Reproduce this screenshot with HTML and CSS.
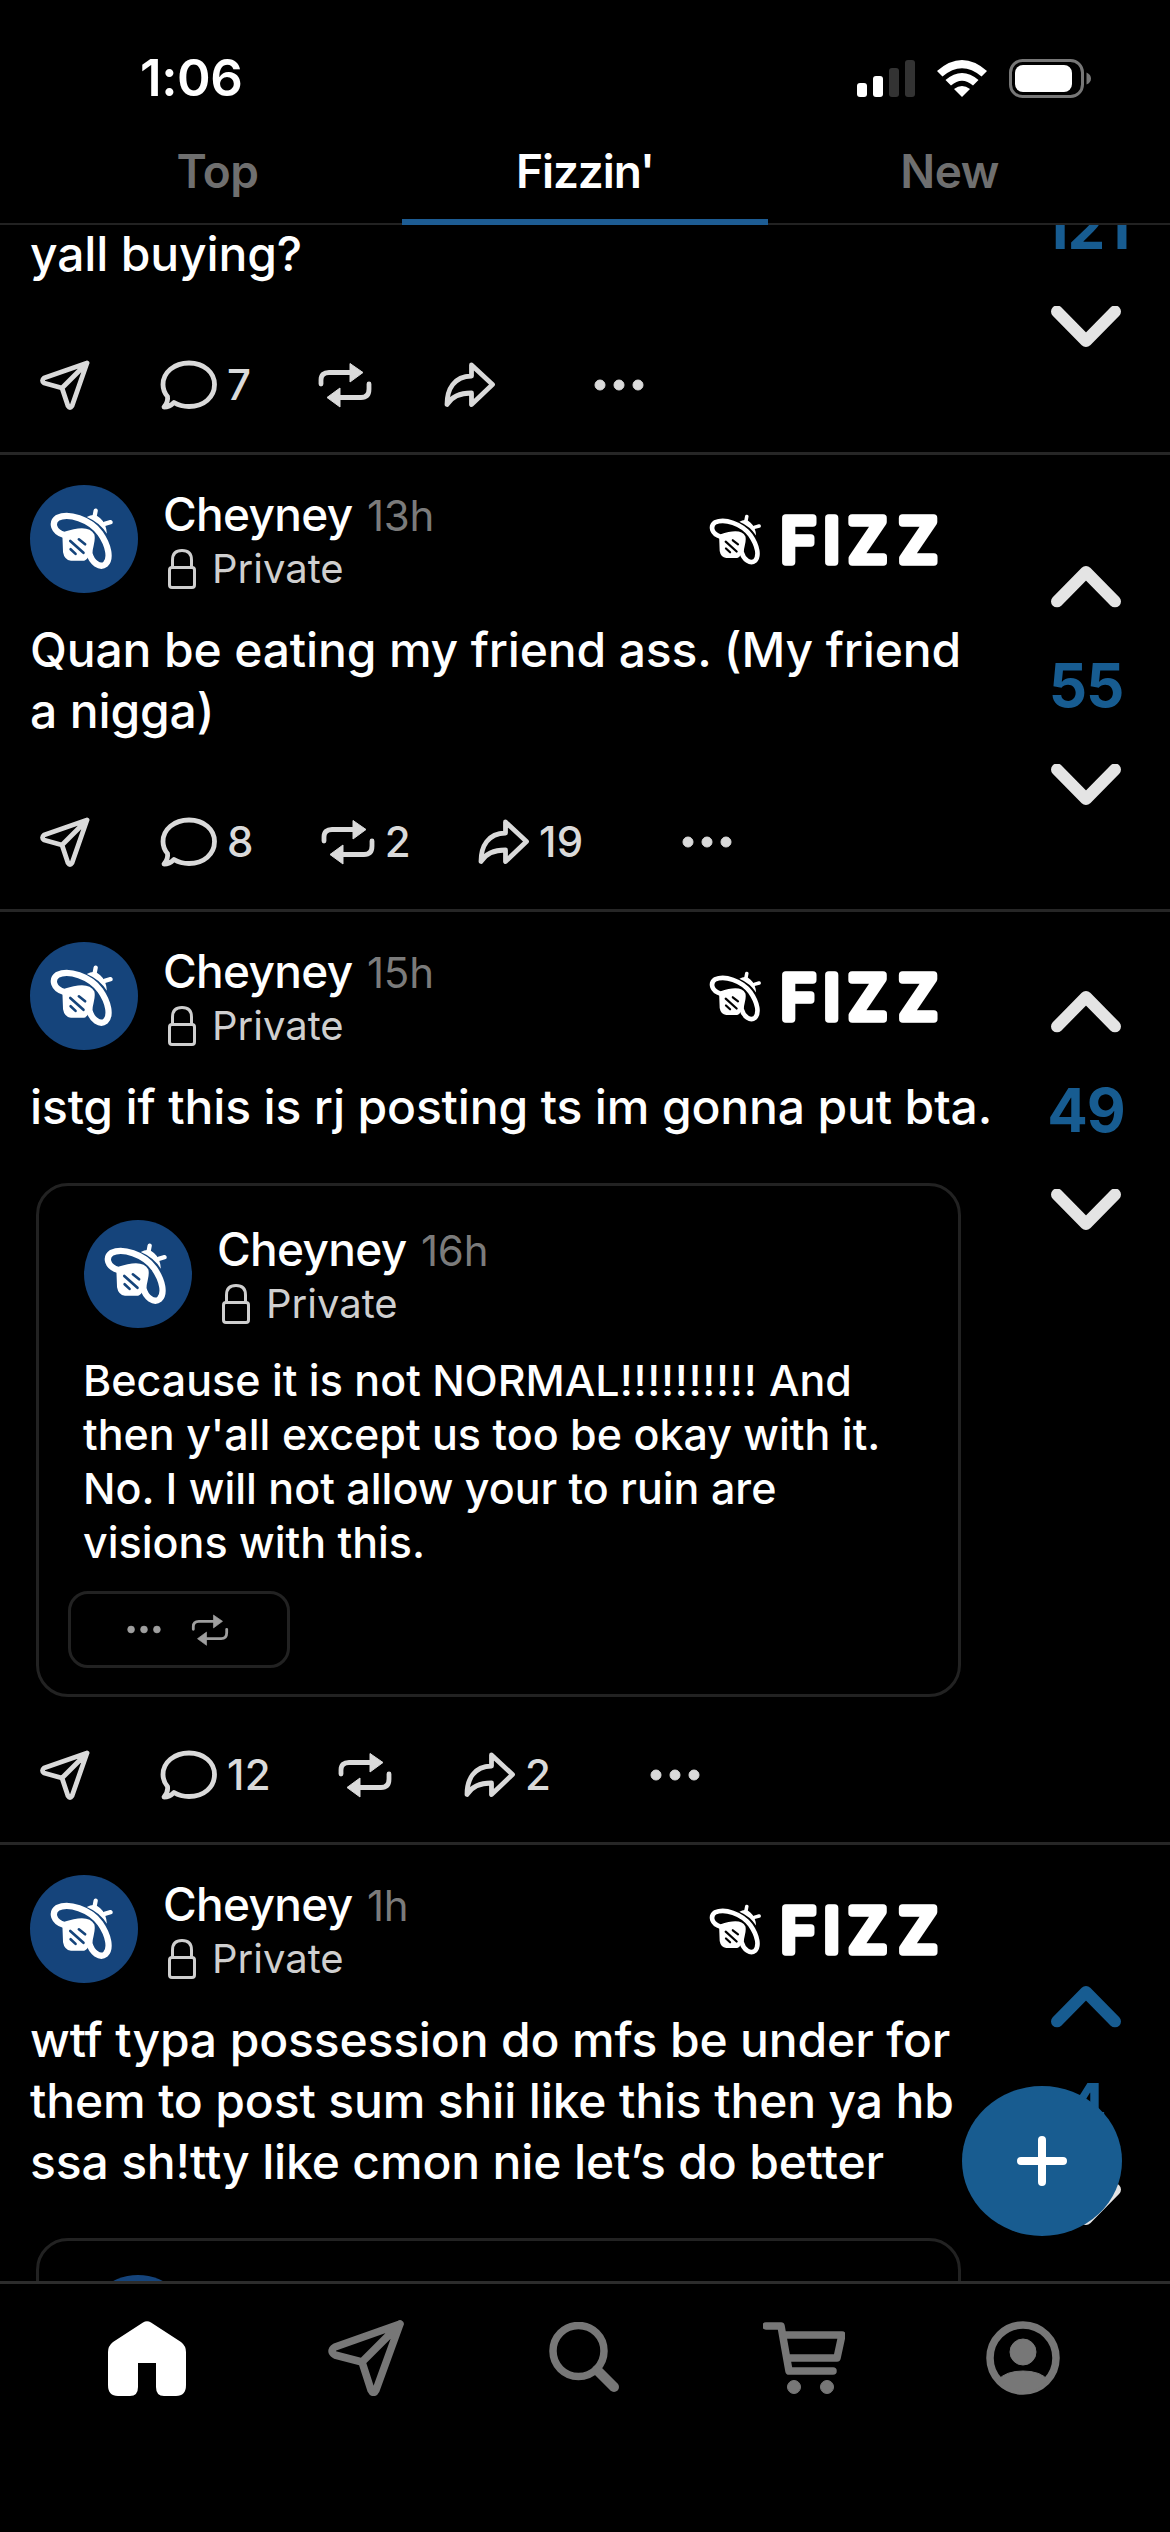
FILE: index.html
```html
<!DOCTYPE html>
<html lang="en">
<head>
<meta charset="utf-8">
<title>Fizz</title>
<link rel="stylesheet" href="styles.css">
</head>
<body>
<svg class="sprite" aria-hidden="true">
  <symbol id="bee" viewBox="75 84 190 188">
    <path class="bee-body" d="M112 166L183 150Q204 158 200 192Q196 240 178 244H138Q118 241 114 218Z"/>
    <path class="bee-wing" d="M118 166C84 156 78 128 97 114C132 98 194 118 226 160C254 200 259 238 243 254C226 268 201 249 194 222C193 200 204 186 200 168C190 148 158 152 118 166Z"/>
    <path class="bee-stripe" d="M136 184L176 220M162 179L181 194M137 209L152 223"/>
    <path class="bee-head" d="M186 111Q210 98 226 114Q245 130 247 162Q226 128 186 111Z"/>
    <path class="bee-feeler" d="M210 108L213 92M240 132L258 127"/>
  </symbol>
  <symbol id="send" viewBox="0 0 50 50">
    <path class="line" d="M47 3L4 18Q1 20.500 4 23L22 28L28 46Q30 49 32 46ZM22 28L47 3"/>
  </symbol>
  <symbol id="comment" viewBox="0 0 57 50">
    <path class="line" d="M29 3C44 3 54.500 12.500 54.500 24.500C54.500 37 44 46.500 29 46.500C23 46.500 18 45 14 42.500C11 45.500 7.500 47 4 47C7 43.500 8 39.500 7.500 36.500C4.500 33 3 29 3 24.500C3 12.500 14 3 29 3Z"/>
  </symbol>
  <symbol id="repost" viewBox="0 0 54 46">
    <path class="line" d="M3 22V18Q3 10.500 11 10.500H33M51 22V27Q51 35.500 43 35.500H20"/>
    <path class="solid" d="M32 1.500V20L45 10.500ZM22 26V45L9 35.500Z"/>
  </symbol>
  <symbol id="share" viewBox="0 0 51 46">
    <path class="line" d="M27.500 3L48.500 22.500L27.500 42.500V31C17 31 8 34 3 42.500C3 27 10 14.500 27.500 14Z"/>
  </symbol>
  <symbol id="dots" viewBox="0 0 50 12">
    <circle class="solid" cx="6" cy="6" r="5"/><circle class="solid" cx="25" cy="6" r="5"/><circle class="solid" cx="44" cy="6" r="5"/>
  </symbol>
  <symbol id="lock" viewBox="0 0 28 40">
    <rect class="line" x="1.500" y="18.500" width="25" height="20" rx="2.500"/>
    <path class="line" d="M4.500 18V11Q4.500 1.500 14 1.500T23.500 11V18"/>
  </symbol>
  <symbol id="up" viewBox="0 0 70 42">
    <path class="line" d="M6 36L35 6.500L64 36"/>
  </symbol>
  <symbol id="down" viewBox="0 0 70 42">
    <path class="line" d="M6 6L35 35.500L64 6"/>
  </symbol>
</svg>

<div class="phone">
  <header class="status">
    <span class="clock">1:06</span>
    <div class="indicators">
      <svg width="58" height="37" viewBox="0 0 58 37"><rect x="0" y="23" width="10" height="14" rx="3" fill="#fff"/><rect x="16" y="16" width="10" height="21" rx="3" fill="#fff"/><rect x="32" y="8" width="10" height="29" rx="3" fill="#333"/><rect x="48" y="0" width="10" height="37" rx="3" fill="#333"/></svg>
      <svg width="50" height="37" viewBox="0 0 50 37" fill="#fff"><path d="M0 11Q25 -11 50 11L44.500 16.500Q25 0 5.500 16.500Z"/><path d="M8.500 20Q25 6 41.500 20L36 25.500Q25 16 14 25.500Z"/><path d="M17 29Q25 23 33 29L25 37Z"/></svg>
      <svg width="82" height="39" viewBox="0 0 82 39"><rect x="1.500" y="1.500" width="72" height="36" rx="12" fill="none" stroke="#777" stroke-width="3"/><rect x="6" y="6" width="57" height="27" rx="8" fill="#fff"/><path d="M77.500 13.500Q82 15.500 82 19.500T77.500 25.500Z" fill="#777"/></svg>
    </div>
  </header>
  <nav class="tabs">
    <span class="tab">Top</span>
    <span class="tab tab-active">Fizzin'</span>
    <span class="tab">New</span>
  </nav>

  <main class="feed">
    <article class="post post-cut">
      <div class="content">
        <p class="text">yall buying?</p>
        <div class="actions">
          <svg class="i-send"><use href="#send"/></svg>
          <svg class="i-comment"><use href="#comment"/></svg><span class="count">7</span>
          <svg class="i-repost"><use href="#repost"/></svg><span class="none"></span>
          <svg class="i-share"><use href="#share"/></svg>
          <svg class="i-dots"><use href="#dots"/></svg>
        </div>
      </div>
      <aside class="votes">
        <svg class="chev"><use href="#up"/></svg><b class="score">121</b><svg class="chev"><use href="#down"/></svg>
      </aside>
    </article>

    <article class="post post-short">
      <div class="content">
        <div class="head">
          <span class="avatar"><svg class="bee"><use href="#bee"/></svg></span>
          <div class="who">
            <div class="name">Cheyney <span class="time">13h</span></div>
            <div class="private"><svg class="i-lock"><use href="#lock"/></svg>Private</div>
          </div>
          <svg class="logo" viewBox="0 0 232 54"><use href="#bee" x="0" y="1" width="52" height="52"/><text class="logo-text" y="49" x="71.5 114.5 139.5 190">FIZZ</text></svg>
        </div>
        <p class="text">Quan be eating my friend ass. (My friend<br>a nigga)</p>
        <div class="actions">
          <svg class="i-send"><use href="#send"/></svg>
          <svg class="i-comment"><use href="#comment"/></svg><span class="count">8</span>
          <svg class="i-repost"><use href="#repost"/></svg><span class="count">2</span>
          <svg class="i-share"><use href="#share"/></svg><span class="count">19</span>
          <svg class="i-dots"><use href="#dots"/></svg>
        </div>
      </div>
      <aside class="votes">
        <svg class="chev"><use href="#up"/></svg><b class="score">55</b><svg class="chev"><use href="#down"/></svg>
      </aside>
    </article>

    <article class="post post-tall">
      <div class="content">
        <div class="head">
          <span class="avatar"><svg class="bee"><use href="#bee"/></svg></span>
          <div class="who">
            <div class="name">Cheyney <span class="time">15h</span></div>
            <div class="private"><svg class="i-lock"><use href="#lock"/></svg>Private</div>
          </div>
          <svg class="logo" viewBox="0 0 232 54"><use href="#bee" x="0" y="1" width="52" height="52"/><text class="logo-text" y="49" x="71.5 114.5 139.5 190">FIZZ</text></svg>
        </div>
        <p class="text">istg if this is rj posting ts im gonna put bta.</p>
        <section class="quote">
          <div class="head">
            <span class="avatar"><svg class="bee"><use href="#bee"/></svg></span>
            <div class="who">
              <div class="name">Cheyney <span class="time">16h</span></div>
              <div class="private"><svg class="i-lock"><use href="#lock"/></svg>Private</div>
            </div>
          </div>
          <p class="quote-text">Because it is not NORMAL<span class="bangs">!!!!!!!!!!</span> And<br>then y'all except us too be okay with it.<br>No. I will not allow your to ruin are<br>visions with this.</p>
          <div class="pill">
            <svg class="pill-dots"><use href="#dots"/></svg>
            <svg class="pill-repost"><use href="#repost"/></svg>
          </div>
        </section>
        <div class="actions">
          <svg class="i-send"><use href="#send"/></svg>
          <svg class="i-comment"><use href="#comment"/></svg><span class="count">12</span>
          <svg class="i-repost"><use href="#repost"/></svg><span class="none"></span>
          <svg class="i-share"><use href="#share"/></svg><span class="count">2</span>
          <svg class="i-dots"><use href="#dots"/></svg>
        </div>
      </div>
      <aside class="votes">
        <svg class="chev"><use href="#up"/></svg><b class="score">49</b><svg class="chev"><use href="#down"/></svg>
      </aside>
    </article>

    <article class="post post-last">
      <div class="content">
        <div class="head">
          <span class="avatar"><svg class="bee"><use href="#bee"/></svg></span>
          <div class="who">
            <div class="name">Cheyney <span class="time">1h</span></div>
            <div class="private"><svg class="i-lock"><use href="#lock"/></svg>Private</div>
          </div>
          <svg class="logo" viewBox="0 0 232 54"><use href="#bee" x="0" y="1" width="52" height="52"/><text class="logo-text" y="49" x="71.5 114.5 139.5 190">FIZZ</text></svg>
        </div>
        <p class="text">wtf typa possession do mfs be under for<br>them to post sum shii like this then ya hb<br>ssa sh!tty like cmon nie let’s do better</p>
        <section class="quote">
          <div class="head"><span class="avatar"></span></div>
        </section>
      </div>
      <aside class="votes">
        <svg class="chev chev-on"><use href="#up"/></svg><b class="score">4</b><svg class="chev"><use href="#down"/></svg>
      </aside>
    </article>

    <button class="fab" aria-label="New post"><svg width="50" height="50" viewBox="0 0 50 50"><path d="M25 4V46M4 25H46" stroke="#fff" stroke-width="8" stroke-linecap="round"/></svg></button>
  </main>

  <nav class="bar">
    <span class="item"><svg width="78" height="75" viewBox="0 0 78 75"><path fill="#fff" d="M35 1.500Q39 -1 43 1.500L73 21Q78 25 78 31V64Q78 75 68 75H56Q48 75 48 66V42H30V66Q30 75 22 75H10Q0 75 0 64V31Q0 25 5 21Z"/></svg></span>
    <span class="item"><svg width="76" height="76" viewBox="0 0 76 76"><path class="line" d="M72 4L7 27Q1 31 7 35L34 42L43 70Q45.500 75 48 70ZM34 42L72 4"/></svg></span>
    <span class="item"><svg width="72" height="72" viewBox="0 0 72 72"><circle class="line" cx="29.500" cy="29" r="25.500"/><path class="line handle" d="M48 48L65 65"/></svg></span>
    <span class="item"><svg width="82" height="72" viewBox="0 0 82 72"><path class="line" d="M3 4H18L26 49H70M20 13H79L74 36H25"/><circle class="solid" cx="31" cy="65" r="6.500"/><circle class="solid" cx="64" cy="65" r="6.500"/></svg></span>
    <span class="item"><svg width="74" height="74" viewBox="0 0 74 74"><circle class="line" cx="37" cy="37" r="33"/><circle class="solid" cx="37" cy="31" r="13"/><path class="solid" d="M12 59Q20 50 37 50T62 59Q52 71 37 71T12 59Z"/></svg></span>
  </nav>
</div>
</body>
</html>
```
FILE: styles.css
```css
* { box-sizing: border-box; }
body { margin: 0; background: #000; color: #fff; font-family: Inter, "Liberation Sans", sans-serif; }
p { margin: 0; }
svg { display: block; flex: none; }
.sprite { position: absolute; width: 0; height: 0; }
.phone { width: 1170px; height: 2532px; display: flex; flex-direction: column; overflow: hidden; background: #000; }

.line { fill: none; stroke: currentColor; stroke-linecap: round; stroke-linejoin: round; }
.solid { fill: currentColor; stroke: currentColor; stroke-width: 1; stroke-linejoin: round; }

.status { height: 139px; flex: none; display: flex; justify-content: space-between; padding: 46px 79px 0 140px; }
.clock { font-size: 51px; line-height: 63px; font-weight: 600; letter-spacing: -0.4px; }
.indicators { display: flex; align-items: center; gap: 22px; height: 64px; }

.tabs { height: 86px; flex: none; display: grid; grid-template-columns: 402px 366px 402px; border-bottom: 2px solid #222; }
.tab { text-align: center; font-size: 46px; line-height: 65px; font-weight: 600; color: #6f6f6f; padding-left: 33px; letter-spacing: -0.5px; }
.tab:last-child { padding: 0 39px 0 0; }
.tab-active { color: #fff; letter-spacing: -1.1px; padding: 0; border-bottom: 6px solid #1d5c93; height: 86px; }

.feed { flex: 1; min-height: 0; position: relative; overflow: hidden; }
.post { display: grid; grid-template-columns: 1002px 168px; border-bottom: 3px solid #262626; }
.post-cut { height: 230px; }
.post-short { height: 457px; }
.post-tall { height: 933px; }
.post-last { height: 933px; }
.content { display: flex; flex-direction: column; padding: 30px 0 37px 30px; min-height: 0; }
.post-cut .content { padding-top: 0; }
.post-cut .text { margin-top: -2px; }

.head { display: flex; height: 108px; flex: none; }
.avatar { width: 108px; height: 108px; border-radius: 50%; background: #15447b; display: flex; align-items: center; justify-content: center; --bg: #15447b; flex: none; }
.bee { width: 63px; height: 62px; margin-right: 6px; --wing: 19; }
.bee-wing { fill: var(--bg); stroke: #fff; stroke-width: var(--wing); stroke-linejoin: round; }
.bee-body, .bee-head { fill: #fff; }
.bee-stripe { stroke: var(--bg); stroke-width: 8; stroke-linecap: round; fill: none; }
.bee-feeler { stroke: #fff; stroke-width: 13; stroke-linecap: round; fill: none; }
.who { margin-left: 25px; width: 546px; }
.name { font-size: 46px; line-height: 56px; font-weight: 500; white-space: nowrap; letter-spacing: -0.7px; margin-top: 1px; }
.time { font-size: 42px; font-weight: 400; color: #7b7b7b; margin-left: 3px; letter-spacing: -0.2px; }
.private { display: flex; align-items: center; gap: 16px; margin-top: -1px; padding-left: 5px; font-size: 40px; line-height: 52px; font-weight: 400; color: #cfcfcf; letter-spacing: 0; }
.i-lock { width: 28px; height: 40px; stroke-width: 3; }
.logo { width: 232px; height: 54px; margin-top: 28px; --bg: #000; --wing: 17; }
.logo-text { font-family: Inter, sans-serif; font-size: 61px; font-weight: 400; fill: #fff; stroke: #fff; stroke-width: 7.5; stroke-linejoin: round; }

.text { margin-top: 26px; font-size: 48px; line-height: 61px; font-weight: 500; white-space: nowrap; letter-spacing: -0.15px; }
.quote { margin: 46px 0 0 6px; width: 925px; height: 514px; flex: none; border: 3px solid #222; border-radius: 32px; padding: 34px 29px 0 45px; }
.quote-text { margin: 25px 0 0 -1px; font-size: 43px; line-height: 54px; font-weight: 500; white-space: nowrap; letter-spacing: 0; }
.bangs { letter-spacing: 0.7px; }
.pill { width: 222px; height: 77px; margin: 22px 0 0 -16px; border: 3px solid #222; border-radius: 20px; display: flex; align-items: center; gap: 30px; padding-left: 56px; color: #9f9f9f; }
.pill-dots { width: 34px; height: 9px; }
.pill-repost { width: 38px; height: 32px; stroke-width: 4; }

.actions { margin-top: auto; height: 60px; display: flex; align-items: center; color: #dadada; stroke-width: 4.8; }
.i-send { width: 50px; height: 50px; margin-left: 10px; }
.i-comment { width: 57px; height: 50px; margin-left: 70px; }
.count { font-size: 42px; line-height: 60px; font-weight: 500; margin-left: 10px; letter-spacing: 0.3px; }
.i-repost { width: 54px; height: 46px; margin-left: 67px; }
.none { width: 5px; }
.i-share { width: 51px; height: 46px; margin-left: 67px; }
.i-dots { width: 50px; height: 12px; margin-left: 99px; }

.votes { display: flex; flex-direction: column; align-items: center; height: 297px; }
.votes > * { height: 99px; display: flex; align-items: center; }
.chev { width: 70px; padding: 28.5px 0; color: #e4e4e4; stroke-width: 12; }
.chev-on { color: #175c91; }
.score { font-size: 60px; font-weight: 700; line-height: 99px; color: #175c91; letter-spacing: -1px; }
.post-cut .votes { margin-top: -146px; }
.post-short .votes { margin-top: 82px; }
.post-tall .votes { margin-top: 50px; }
.post-last .votes { margin-top: 112px; }

.fab { position: absolute; left: 962px; top: 1861px; width: 160px; height: 150px; border: 0; border-radius: 50%; background: #185c90; padding: 0; display: flex; align-items: center; justify-content: center; }

.bar { height: 251px; flex: none; border-top: 3px solid #2c2c2c; display: grid; grid-template-columns: repeat(5, 1fr); padding: 0 37px; color: #777; stroke-width: 7.5; }
.item { height: 148px; display: flex; align-items: center; justify-content: center; }
.handle { stroke-width: 10; }
```
